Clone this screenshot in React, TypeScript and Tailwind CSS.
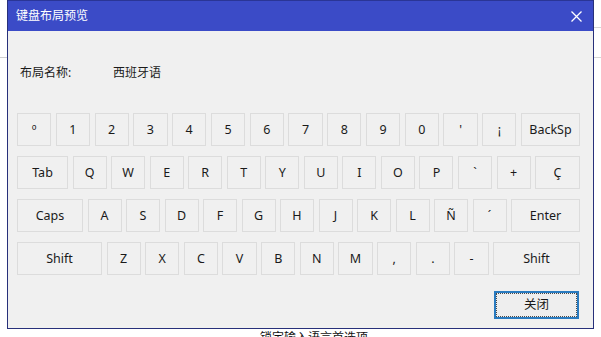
import React from 'react';

type Key = { label: string; w?: string };

const rows: Key[][] = [
  [
    { label: 'º' }, { label: '1' }, { label: '2' }, { label: '3' }, { label: '4' },
    { label: '5' }, { label: '6' }, { label: '7' }, { label: '8' }, { label: '9' },
    { label: '0' }, { label: "'" }, { label: '¡' }, { label: 'BackSp', w: 'w-[59px]' },
  ],
  [
    { label: 'Tab', w: 'w-[51px]' }, { label: 'Q' }, { label: 'W' }, { label: 'E' },
    { label: 'R' }, { label: 'T' }, { label: 'Y' }, { label: 'U' }, { label: 'I' },
    { label: 'O' }, { label: 'P' }, { label: '`' }, { label: '+' }, { label: 'Ç', w: 'w-[45px]' },
  ],
  [
    { label: 'Caps', w: 'w-[66px]' }, { label: 'A' }, { label: 'S' }, { label: 'D' },
    { label: 'F' }, { label: 'G' }, { label: 'H' }, { label: 'J' }, { label: 'K' },
    { label: 'L' }, { label: 'Ñ' }, { label: '´' }, { label: 'Enter', w: 'w-[69px]' },
  ],
  [
    { label: 'Shift', w: 'w-[85px]' }, { label: 'Z' }, { label: 'X' }, { label: 'C' },
    { label: 'V' }, { label: 'B' }, { label: 'N' }, { label: 'M' }, { label: ',' },
    { label: '.' }, { label: '-' }, { label: 'Shift', w: 'w-[87px]' },
  ],
];

const KeyCap = ({ k }: { k: Key }) => (
  <div
    className={`${k.w ?? 'flex-1'} h-[33px] shrink-0 flex items-center justify-center pt-[2px] bg-[#f0f0f0] border border-[#dcdcdc] text-[12.5px] text-[#1a1a1a]`}
  >
    {k.label}
  </div>
);

export default function App() {
  return (
    <div
      className="relative w-[601px] h-[337px] overflow-hidden bg-white"
      style={{ fontFamily: '"Noto Sans", "Noto Sans CJK SC", sans-serif' }}
    >
      {/* 背后窗口的线条 */}
      <div className="absolute left-0 top-[57px] w-[8px] h-px bg-[#cfcfcf]" />
      <div className="absolute right-0 top-[27px] w-[8px] h-px bg-[#d6d6d6]" />
      <div className="absolute right-0 top-[57px] w-[8px] h-px bg-[#d6d6d6]" />
      <div className="absolute left-[260px] top-[330px] text-[12px] leading-[16px] text-[#111]">
        锁定输入语言首选项
      </div>

      {/* 对话框 */}
      <div className="absolute left-[7px] top-0 w-[587px] h-[329px] flex flex-col bg-[#f0f0f0] border border-t-0 border-[#27307a]">
        {/* 标题栏 */}
        <div className="h-[31px] shrink-0 flex items-center justify-between bg-[#3b4bc7] border-t border-[#2a3596] pl-[8px] pr-[11px]">
          <span className="text-[12px] text-white">键盘布局预览</span>
          <svg width="11" height="11" viewBox="0 0 11 11" className="text-white">
            <path d="M0.5 0.5 L10.5 10.5 M10.5 0.5 L0.5 10.5" stroke="currentColor" strokeWidth="1.3" />
          </svg>
        </div>

        <div className="flex-1 flex flex-col pl-[9px] pr-[13px] pt-[34px]">
          <div className="flex items-center h-[16px] text-[12px] text-[#1a1a1a] pl-[3px]">
            <span className="w-[93px]">布局名称:</span>
            <span>西班牙语</span>
          </div>

          <div className="mt-[32px] flex flex-col gap-[10px]">
            {rows.map((row, i) => (
              <div key={i} className="flex gap-[4.5px]">
                {row.map((k, j) => (
                  <KeyCap key={j} k={k} />
                ))}
              </div>
            ))}
          </div>

          <div className="mt-[16px] flex justify-end pr-[1px]">
            <button className="w-[85px] h-[28px] flex items-center justify-center bg-[#eeeeee] border-2 border-[#2a7bc0] text-[12.5px] text-[#1a1a1a]">
              <span className="w-full h-full flex items-center justify-center border border-dotted border-[#4a4a4a]">
                关闭
              </span>
            </button>
          </div>
        </div>
      </div>
    </div>
  );
}
